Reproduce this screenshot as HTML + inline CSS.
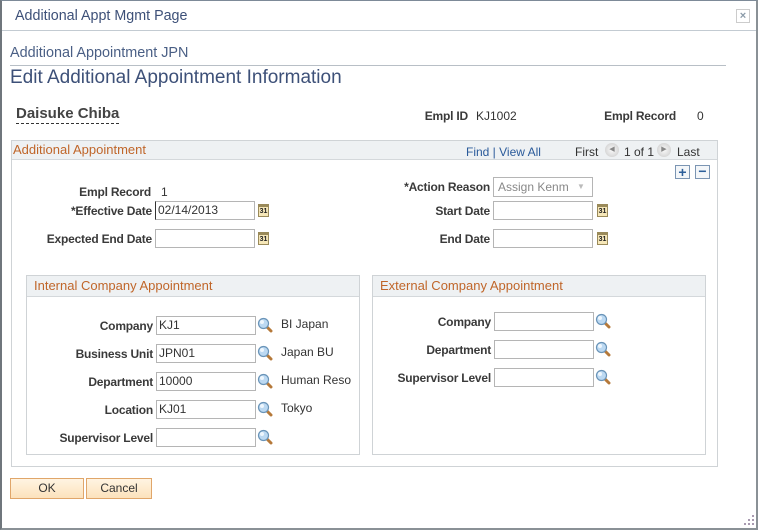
<!DOCTYPE html>
<html><head><meta charset="utf-8">
<style>
*{margin:0;padding:0;box-sizing:border-box}
body{width:758px;height:530px;background:#fff;font-family:"Liberation Sans",Arial,sans-serif;position:relative;overflow:hidden;color:#333}
.a{position:absolute;white-space:nowrap}
.frame{position:absolute;left:0;top:0;width:758px;height:530px;border-left:2px solid #6f767c;border-top:1px solid #7d8a98;border-right:2px solid #8a9196;border-bottom:2px solid #8a9196}
.lbl{position:absolute;font-weight:bold;font-size:12px;letter-spacing:-0.2px;color:#3a3a3a;text-align:right;white-space:nowrap}
.val{position:absolute;font-size:12px;color:#333;white-space:nowrap}
.in{position:absolute;width:100px;height:19px;border:1px solid #b5b5b5;background:#fff;font-size:12px;line-height:17px;padding-left:2px;color:#333}
.cal{position:absolute;width:11px;height:13px;background:#f6e7b8;border:1px solid #9a8a5a;border-top:3px solid #9a8a5a;font-size:7px;font-weight:bold;line-height:9px;text-align:center;color:#222}
.mag{position:absolute;width:16px;height:16px}
.box{position:absolute;border:1px solid #cfd3d6}
.hdr{position:absolute;left:0;top:0;right:0;background:#eef1f3;border-bottom:1px solid #d4d8db;color:#c0662a;font-size:13px;padding-left:7px}
.btn{position:absolute;height:21px;border:1px solid #e0a66a;background:linear-gradient(#fff4e2,#fce2bc);font-size:12px;text-align:center;line-height:19px;color:#333}
</style></head><body>
<div class="frame"></div>
<div class="a" style="left:15px;top:8px;font-size:14.3px;color:#3d5078">Additional Appt Mgmt Page</div>
<div class="a" style="left:736px;top:9px;width:14px;height:14px;border:1px solid #ccc;color:#8a9aa8;font-size:11px;line-height:12px;text-align:center;font-weight:bold">×</div>
<div class="a" style="left:2px;top:30px;width:754px;height:1px;background:#c3cbd2"></div>
<div class="a" style="left:10px;top:45px;font-size:14.4px;color:#4a5f85">Additional Appointment JPN</div>
<div class="a" style="left:10px;top:65px;width:716px;height:1px;background:#b8bfc6"></div>
<div class="a" style="left:10px;top:67px;font-size:19px;color:#3d5078">Edit Additional Appointment Information</div>
<div class="a" style="left:16px;top:105px;font-size:15px;font-weight:bold;color:#444;border-bottom:1px dashed #333;padding-bottom:1px">Daisuke Chiba</div>
<div class="lbl" style="right:290px;top:109px">Empl ID</div>
<div class="val" style="left:476px;top:109px">KJ1002</div>
<div class="lbl" style="right:82px;top:109px">Empl Record</div>
<div class="val" style="left:697px;top:109px">0</div>

<div class="box" style="left:11px;top:140px;width:707px;height:327px">
 <div class="hdr" style="height:19px;line-height:18px;padding-left:1px">Additional Appointment</div>
</div>
<div class="a" style="left:466px;top:145px;font-size:12px;color:#2a5a9a">Find | View All</div>
<div class="a" style="left:575px;top:145px;font-size:12px;color:#333">First</div>
<div class="a" style="left:605px;top:143px;width:14px;height:14px;border-radius:50%;background:radial-gradient(#fafafa,#c8c8c8);font-size:7px;line-height:14px;text-align:center;color:#888">◀</div>
<div class="a" style="left:624px;top:145px;font-size:12px;color:#333">1 of 1</div>
<div class="a" style="left:657px;top:143px;width:14px;height:14px;border-radius:50%;background:radial-gradient(#fafafa,#c8c8c8);font-size:7px;line-height:14px;text-align:center;color:#888">▶</div>
<div class="a" style="left:677px;top:145px;font-size:12px;color:#333">Last</div>
<div class="a" style="left:675px;top:165px;width:15px;height:14px;border:1px solid #7b95b3;background:#f3f6f9;color:#2d5f9a;font-weight:bold;font-size:14px;line-height:12px;text-align:center">+</div>
<div class="a" style="left:695px;top:165px;width:15px;height:14px;border:1px solid #7b95b3;background:#f3f6f9;color:#2d5f9a;font-weight:bold;font-size:14px;line-height:11px;text-align:center">−</div>

<div class="lbl" style="right:607px;top:185px">Empl Record</div>
<div class="val" style="left:161px;top:185px">1</div>
<div class="lbl" style="right:606px;top:204px">*Effective Date</div>
<div class="in" style="left:155px;top:201px;border-left:1px solid #333">02/14/2013</div>
<div class="cal" style="left:258px;top:204px">31</div>
<div class="lbl" style="right:606px;top:232px">Expected End Date</div>
<div class="in" style="left:155px;top:229px"></div>
<div class="cal" style="left:258px;top:232px">31</div>

<div class="lbl" style="right:268px;top:180px">*Action Reason</div>
<div class="a" style="left:493px;top:177px;width:100px;height:20px;border:1px solid #b5b5b5;font-size:12px;line-height:18px;padding-left:4px;color:#888;overflow:hidden">Assign Kenm<span style="position:absolute;right:0;top:0;width:22px;height:18px;background:#fff;color:#bbb;font-size:8px;text-align:center">▼</span></div>
<div class="lbl" style="right:268px;top:204px">Start Date</div>
<div class="in" style="left:493px;top:201px"></div>
<div class="cal" style="left:597px;top:204px">31</div>
<div class="lbl" style="right:268px;top:232px">End Date</div>
<div class="in" style="left:493px;top:229px"></div>
<div class="cal" style="left:597px;top:232px">31</div>

<div class="box" style="left:26px;top:275px;width:334px;height:180px">
 <div class="hdr" style="height:21px;line-height:20px">Internal Company Appointment</div>
</div>
<div class="box" style="left:372px;top:275px;width:334px;height:180px">
 <div class="hdr" style="height:21px;line-height:20px">External Company Appointment</div>
</div>

<svg width="0" height="0" style="position:absolute"><defs>
<symbol id="m" viewBox="0 0 16 16"><line x1="9" y1="9" x2="14" y2="14" stroke="#b5793a" stroke-width="3" stroke-linecap="round"/><circle cx="6.5" cy="6.5" r="5" fill="#bcd9f2" stroke="#6a94b8" stroke-width="1.2"/><circle cx="5" cy="5" r="2" fill="#eef6fd"/></symbol>
</defs></svg>

<div class="lbl" style="right:605px;top:319px">Company</div>
<div class="in" style="left:156px;top:316px">KJ1</div>
<svg class="mag" style="left:257px;top:317px"><use href="#m"/></svg>
<div class="val" style="left:281px;top:317px">BI Japan</div>
<div class="lbl" style="right:605px;top:347px">Business Unit</div>
<div class="in" style="left:156px;top:344px">JPN01</div>
<svg class="mag" style="left:257px;top:345px"><use href="#m"/></svg>
<div class="val" style="left:281px;top:345px">Japan BU</div>
<div class="lbl" style="right:605px;top:375px">Department</div>
<div class="in" style="left:156px;top:372px">10000</div>
<svg class="mag" style="left:257px;top:373px"><use href="#m"/></svg>
<div class="val" style="left:281px;top:373px">Human Reso</div>
<div class="lbl" style="right:605px;top:403px">Location</div>
<div class="in" style="left:156px;top:400px">KJ01</div>
<svg class="mag" style="left:257px;top:401px"><use href="#m"/></svg>
<div class="val" style="left:281px;top:401px">Tokyo</div>
<div class="lbl" style="right:605px;top:431px">Supervisor Level</div>
<div class="in" style="left:156px;top:428px"></div>
<svg class="mag" style="left:257px;top:429px"><use href="#m"/></svg>

<div class="lbl" style="right:267px;top:315px">Company</div>
<div class="in" style="left:494px;top:312px"></div>
<svg class="mag" style="left:595px;top:313px"><use href="#m"/></svg>
<div class="lbl" style="right:267px;top:343px">Department</div>
<div class="in" style="left:494px;top:340px"></div>
<svg class="mag" style="left:595px;top:341px"><use href="#m"/></svg>
<div class="lbl" style="right:267px;top:371px">Supervisor Level</div>
<div class="in" style="left:494px;top:368px"></div>
<svg class="mag" style="left:595px;top:369px"><use href="#m"/></svg>

<div class="btn" style="left:10px;top:478px;width:74px">OK</div>
<div class="btn" style="left:86px;top:478px;width:66px">Cancel</div>

<svg class="a" style="left:744px;top:515px" width="12" height="12"><g fill="#a89ab0"><rect x="8" y="0" width="2" height="2"/><rect x="4" y="4" width="2" height="2"/><rect x="8" y="4" width="2" height="2"/><rect x="0" y="8" width="2" height="2"/><rect x="4" y="8" width="2" height="2"/><rect x="8" y="8" width="2" height="2"/></g></svg>
</body></html>
